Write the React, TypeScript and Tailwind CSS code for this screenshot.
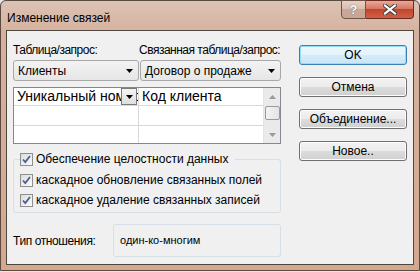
import React from "react";

const ui = { fontFamily: '"Liberation Sans", Arial, sans-serif' };

function Arrow({ className = "" }: { className?: string }) {
  return (
    <svg width="7" height="4" viewBox="0 0 7 4" className={className}>
      <path d="M0 0h7L3.5 4z" fill="#000" />
    </svg>
  );
}

function Combo({ text, w }: { text: string; w: string }) {
  return (
    <div
      className={`${w} h-[21px] flex items-center justify-between pl-[4px] pr-[5px] rounded-[3px] border border-[#a8a8a8] bg-[linear-gradient(#f3f3f3,#e6e6e6)] text-[12px] text-black`}
      style={ui}
    >
      <span className="whitespace-nowrap">{text}</span>
      <Arrow />
    </div>
  );
}

function Btn({ text, def = false }: { text: string; def?: boolean }) {
  return (
    <div
      className={`w-[108px] h-[20px] flex items-center justify-center rounded-[3px] border text-[12px] text-black ${
        def
          ? "border-[#3c7fb1] bg-[linear-gradient(#eaf6fd_0%,#e3f3fc_50%,#d3ecfa_50%,#c9e6f7_100%)] shadow-[inset_0_0_0_1px_#94ddf6]"
          : "border-[#707070] bg-[linear-gradient(#f2f2f2_0%,#ebebeb_50%,#dddddd_50%,#cfcfcf_100%)] shadow-[inset_0_0_0_1px_#fcfcfc]"
      }`}
      style={ui}
    >
      {text}
    </div>
  );
}

function Check({ text }: { text: string }) {
  return (
    <div className="h-[14px] flex items-center gap-[3px] text-[12px] leading-[14px] text-black whitespace-nowrap" style={ui}>
      <div className="w-[13px] h-[13px] border border-[#8e8f8f] bg-[linear-gradient(135deg,#dcdcdc,#fbfbfb)] flex items-center justify-center">
        <svg width="9" height="9" viewBox="0 0 9 9">
          <path d="M1 4.5l2.3 2.6L8 1" fill="none" stroke="#4a5f97" strokeWidth="1.8" />
        </svg>
      </div>
      <span>{text}</span>
    </div>
  );
}

export default function App() {
  return (
    <div className="w-[420px] h-[272px] bg-[#e9e6e4] overflow-hidden">
      <div className="w-[420px] h-[271px] rounded-t-[6px] border border-[#5b4a40] bg-[linear-gradient(180deg,#dcc3b5_0%,#d6b19d_12%,#d4a88f_100%)] flex flex-col">
        {/* title bar */}
        <div className="h-[29px] flex items-start justify-between relative">
          <div
            className="pl-[6px] pt-[9px] text-[12px] text-black leading-[16px] whitespace-nowrap"
            style={ui}
          >
            Изменение связей
          </div>
          <div className="flex mr-[5px] -mt-[1px]">
            <div className="w-[25px] h-[19px] rounded-bl-[4px] border border-[#6a5548] bg-[linear-gradient(#e6d2c6_0%,#d8bcac_50%,#c9a795_50%,#c7a696_100%)] flex items-center justify-center text-[13px] font-bold text-white [text-shadow:0_0_1px_#333]" style={ui}>
              ?
            </div>
            <div className="w-[48px] h-[19px] rounded-br-[4px] border border-l-0 border-[#6a2c20] bg-[linear-gradient(#e9a99a_0%,#d4725d_50%,#c2452c_50%,#d0604a_100%)] flex items-center justify-center">
              <svg width="14" height="11" viewBox="0 0 14 11">
                <path d="M2 1.5l10 8M12 1.5l-10 8" stroke="#3b3b3b" strokeWidth="4" strokeLinecap="square" />
                <path d="M2 1.5l10 8M12 1.5l-10 8" stroke="#fff" strokeWidth="2.2" strokeLinecap="square" />
              </svg>
            </div>
          </div>
        </div>
        {/* client area */}
        <div className="mx-[5px] h-[235px] border border-[#4f4742] bg-[#f0f0f0] flex">
          <div className="w-[281px] shrink-0 pl-[6px] pt-[11px] flex flex-col">
            <div className="flex text-[12px] text-black leading-[16px] tracking-[-0.5px] whitespace-nowrap" style={ui}>
              <span className="w-[126px] shrink-0">Таблица/запрос:</span>
              <span>Связанная таблица/запрос:</span>
            </div>
            <div className="flex mt-[2px] gap-[1px]">
              <Combo text="Клиенты" w="w-[126px]" />
              <Combo text="Договор о продаже" w="w-[141px]" />
            </div>
            {/* grid */}
            <div className="mt-[6px] w-[268px] h-[57px] border border-[#828790] bg-white flex">
              <div className="flex-1 flex flex-col">
                <div className="flex h-[18px] border-b border-[#d9d9d9]">
                  <div className="w-[125px] border-r border-[#d9d9d9] flex items-center relative overflow-hidden">
                    <span className="pl-[3px] whitespace-nowrap text-[14px] leading-[17px] text-black" style={ui}>
                      Уникальный номер
                    </span>
                    <div className="absolute right-[1px] top-[0px] w-[16px] h-[17px] border border-[#7a7a7a] bg-[linear-gradient(#f4f4f4,#dedede)] flex items-center justify-center">
                      <Arrow />
                    </div>
                  </div>
                  <div className="flex-1 flex items-center">
                    <span className="pl-[3px] text-[14px] leading-[17px] text-black whitespace-nowrap" style={ui}>
                      Код клиента
                    </span>
                  </div>
                </div>
                <div className="flex h-[20px] border-b border-[#d9d9d9]">
                  <div className="w-[125px] border-r border-[#d9d9d9]" />
                </div>
                <div className="flex flex-1">
                  <div className="w-[125px] border-r border-[#d9d9d9]" />
                </div>
              </div>
              {/* scrollbar */}
              <div className="w-[17px] bg-[#eaeaea] border-l border-[#e3e3e3] flex flex-col items-center">
                <div className="h-[17px] flex items-center justify-center">
                  <svg width="7" height="4" viewBox="0 0 7 4">
                    <path d="M0 4h7L3.5 0z" fill="#9a9a9a" />
                  </svg>
                </div>
                <div className="mt-[1px] w-[15px] h-[14px] rounded-[2px] border border-[#9a9a9a] bg-[linear-gradient(90deg,#f3f3f3,#e4e4e4)]" />
                <div className="flex-1" />
                <div className="h-[17px] flex items-center justify-center">
                  <svg width="7" height="4" viewBox="0 0 7 4">
                    <path d="M0 0h7L3.5 4z" fill="#9a9a9a" />
                  </svg>
                </div>
              </div>
            </div>
            {/* group */}
            <div className="relative mt-[15px] w-[268px] h-[54px] rounded-[3px] border border-[#d5dfe5]">
              <div className="absolute left-[6px] -top-[8px] bg-[#f0f0f0] pr-[6px]">
                <Check text="Обеспечение целостности данных" />
              </div>
              <div className="pl-[6px] pt-[13px] flex flex-col gap-[6px]">
                <Check text="каскадное обновление связанных полей" />
                <Check text="каскадное удаление связанных записей" />
              </div>
            </div>
            {/* relation type */}
            <div className="mt-[11px] flex items-center">
              <span className="w-[100px] text-[12px] text-black tracking-[-0.4px] whitespace-nowrap" style={ui}>
                Тип отношения:
              </span>
              <div
                className="w-[168px] h-[33px] rounded-[3px] border border-[#d5dfe5] pl-[6px] pt-[8px] text-[11px] leading-[14px] text-black"
                style={ui}
              >
                один-ко-многим
              </div>
            </div>
          </div>
          <div className="pl-[11px] pt-[14px] flex flex-col gap-[12px]">
            <Btn text="OK" def />
            <Btn text="Отмена" />
            <Btn text="Объединение..." />
            <Btn text="Новое.." />
          </div>
        </div>
      </div>
    </div>
  );
}
